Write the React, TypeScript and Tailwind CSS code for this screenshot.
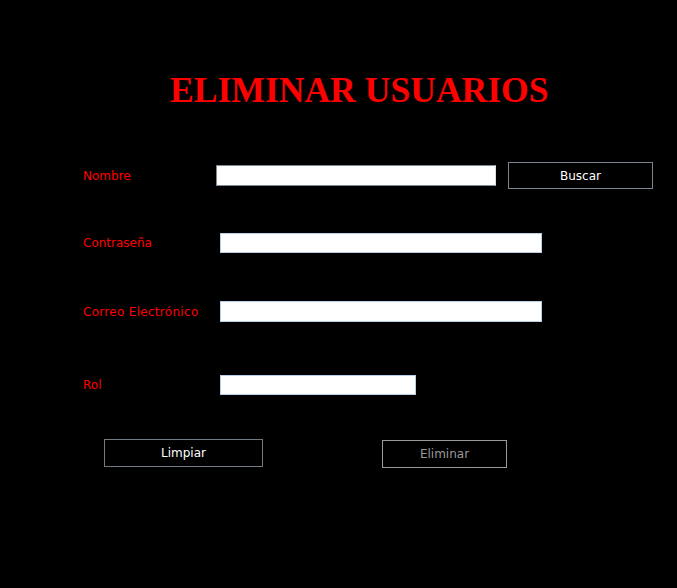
import React from "react";

const labelCls = "text-[12px] text-[#ff0000] leading-none";

export default function App() {
  return (
    <div
      className="w-[677px] h-[588px] bg-black flex flex-col overflow-hidden"
      style={{ fontFamily: '"DejaVu Sans", Verdana, sans-serif' }}
    >
      <h1
        className="mt-[70px] ml-[170px] text-[35.6px] leading-[40px] font-bold text-[#ff0000] whitespace-nowrap"
        style={{ fontFamily: '"Liberation Serif", "Times New Roman", serif' }}
      >
        ELIMINAR USUARIOS
      </h1>

      <div className="mt-[52px] flex items-center h-[27px] pl-[83px]">
        <span className={`${labelCls} w-[133px]`}>Nombre</span>
        <input
          type="text"
          className="w-[280px] h-[21px] bg-white border border-[#7b8896] border-r-[#d8dee4] outline-none"
        />
        <button className="ml-[12px] w-[145px] h-[27px] border border-[#7a8591] bg-black text-white text-[12px]">
          Buscar
        </button>
      </div>

      <div className="mt-[44px] flex items-center h-[20px] pl-[83px]">
        <span className={`${labelCls} w-[137px]`}>Contraseña</span>
        <input
          type="text"
          className="w-[322px] h-[20px] bg-white border border-[#b8cfe5] outline-none"
        />
      </div>

      <div className="mt-[48px] flex items-center h-[21px] pl-[83px]">
        <span className={`${labelCls} w-[137px] tracking-[0.3px] whitespace-nowrap`}>Correo Electrónico</span>
        <input
          type="text"
          className="w-[322px] h-[21px] bg-white border border-[#b8cfe5] outline-none"
        />
      </div>

      <div className="mt-[53px] flex items-center h-[20px] pl-[83px]">
        <span className={`${labelCls} w-[137px]`}>Rol</span>
        <input
          type="text"
          className="w-[196px] h-[20px] bg-white border border-[#b8cfe5] outline-none"
        />
      </div>

      <div className="mt-[44px] flex items-start pl-[104px]">
        <button className="w-[159px] h-[28px] border border-[#6f7a85] bg-black text-white text-[12px]">
          Limpiar
        </button>
        <button
          disabled
          className="ml-[119px] mt-[1px] w-[125px] h-[28px] border border-[#9a9a9a] bg-black text-[#9a9a9a] text-[12px]"
        >
          Eliminar
        </button>
      </div>
    </div>
  );
}
